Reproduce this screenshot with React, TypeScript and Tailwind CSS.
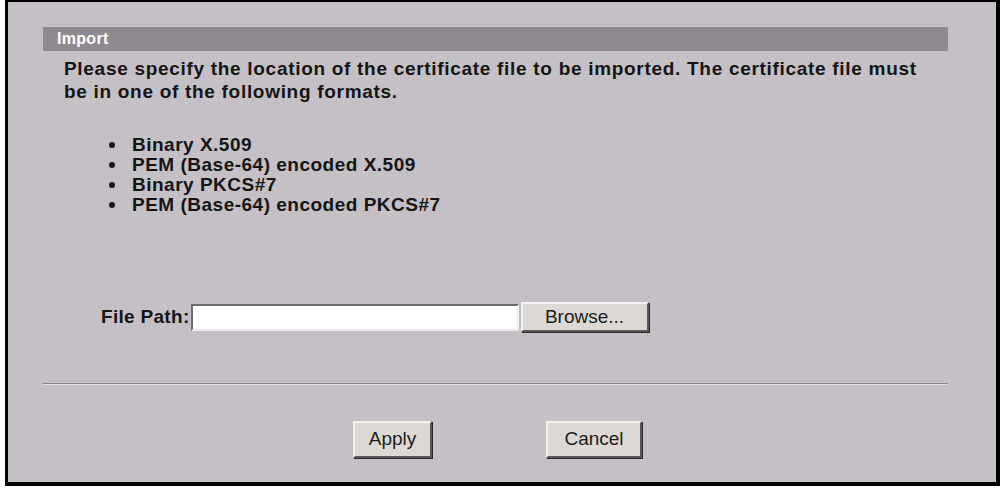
const formats = [
  "Binary X.509",
  "PEM (Base-64) encoded X.509",
  "Binary PKCS#7",
  "PEM (Base-64) encoded PKCS#7",
];

function ClassicButton({ label, className }: { label: string; className?: string }) {
  return (
    <button
      className={
        "flex items-center justify-center bg-[#dcd8d3] border-2 border-t-[#f4f2f0] border-l-[#f4f2f0] border-r-[#5a575a] border-b-[#5a575a] text-[19px] text-[#1c1c1c] shadow-[1px_1px_0_#2a2a2a] " +
        (className ?? "")
      }
    >
      {label}
    </button>
  );
}

export default function App() {
  return (
    <div className="w-[1004px] h-[492px] bg-white font-['Liberation_Sans',Arial,sans-serif]">
      <div className="ml-[5px] w-[995px] h-[486px] bg-[#c4c0c5] border-l-[3px] border-r-4 border-b-4 border-t-2 border-black pt-[25px] pl-[35px] pr-[48px]">
        {/* Section header */}
        <div className="h-[24px] bg-[#8f8a90] flex items-center pl-[14px] text-white font-bold text-[16px] tracking-[0.3px]">
          Import
        </div>

        <p className="mt-[6px] ml-[21px] w-[872px] text-[19px] leading-[23px] font-bold text-[#151515] tracking-[0.7px]">
          Please specify the location of the certificate file to be imported. The certificate file must be in one of the following formats.
        </p>

        <ul className="mt-[32px] ml-[64px] flex flex-col text-[19px] leading-[20px] font-bold text-[#151515] tracking-[0.5px]">
          {formats.map((f) => (
            <li key={f} className="flex items-center">
              <span className="w-[25px] flex items-center">
                <span className="ml-[2px] w-[6px] h-[6px] rounded-full bg-[#1a1a1a]" />
              </span>
              {f}
            </li>
          ))}
        </ul>

        <div className="mt-[87px] ml-[58px] flex items-center">
          <span className="text-[19px] font-bold text-[#151515] tracking-[0.3px]">File Path:</span>
          <div className="ml-[1px] w-[328px] h-[27px] bg-white border-2 border-t-[#6f6c6f] border-l-[#6f6c6f] border-r-[#ebe9eb] border-b-[#ebe9eb]" />
          <ClassicButton label="Browse..." className="ml-[2px] w-[128px] h-[30px]" />
        </div>

        <div className="mt-[51px] h-[2px] bg-[#8a868b] border-b border-[#e2dfe2]" />

        <div className="mt-[36px] flex">
          <ClassicButton label="Apply" className="ml-[310px] w-[79px] h-[37px]" />
          <ClassicButton label="Cancel" className="ml-[114px] w-[96px] h-[37px]" />
        </div>
      </div>
    </div>
  );
}
